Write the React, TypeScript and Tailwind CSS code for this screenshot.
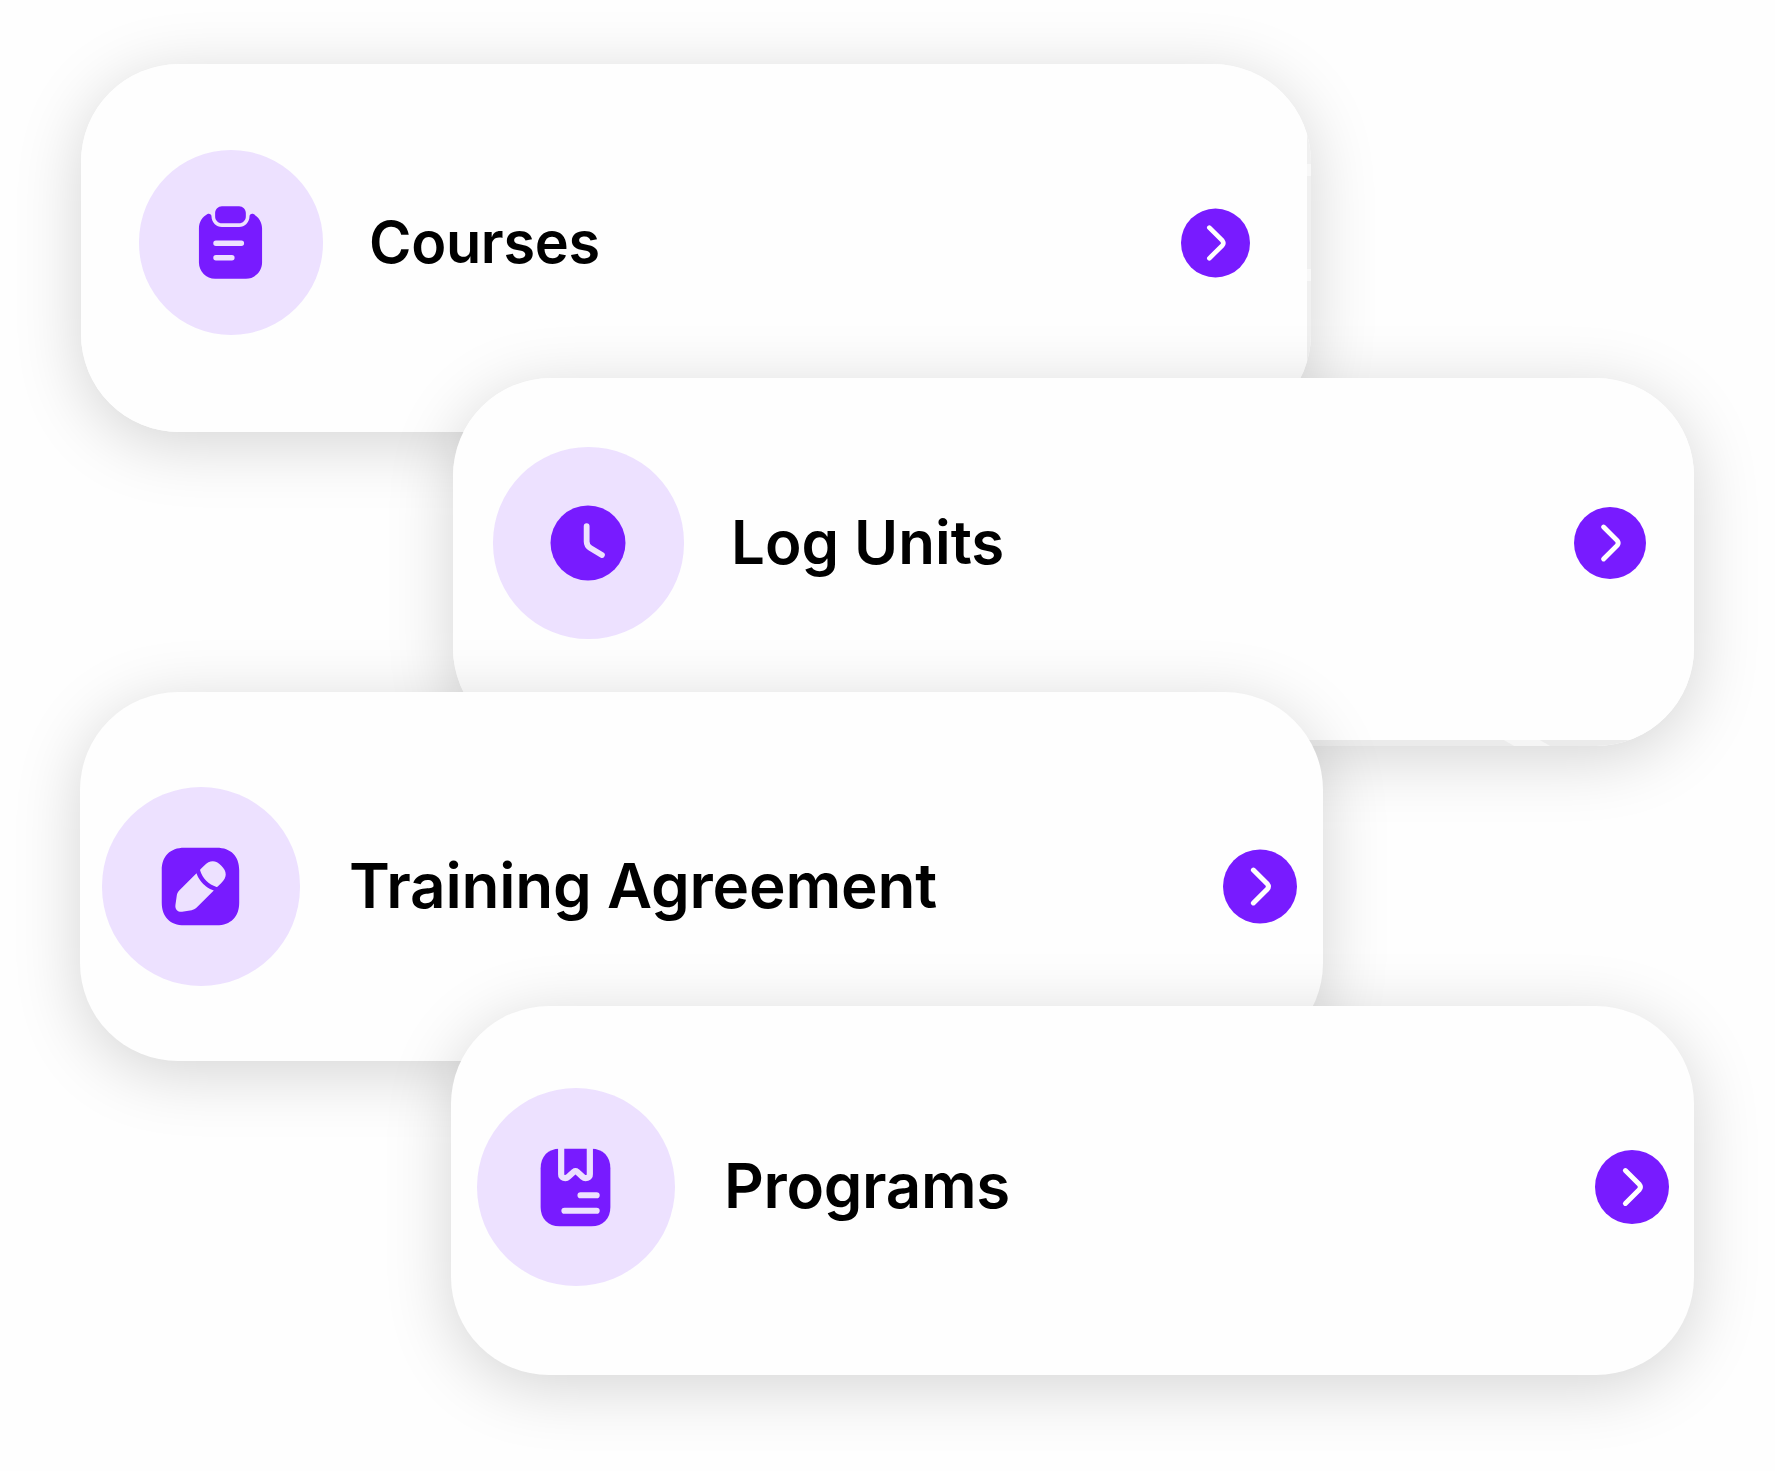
import type { ReactNode } from "react";

interface MenuCardProps {
  title: string;
  icon: ReactNode;
  card: string;
  badge: string;
  iconSize: string;
  text: string;
  arrow: string;
  children?: ReactNode;
}

const ClipboardIcon = () => (
  <svg viewBox="0 0 24 24" className="w-full h-full">
    <g fill="#781bff">
      <path d="M14.35 2h-4.7c-1.04 0-1.89.84-1.89 1.88v.94c0 1.04.84 1.88 1.88 1.88h4.71c1.04 0 1.88-.84 1.88-1.88v-.94C16.24 2.84 15.39 2 14.35 2Z" />
      <path d="M17.24 4.82c0 1.59-1.3 2.89-2.89 2.89h-4.7c-1.59 0-2.89-1.3-2.89-2.89 0-.56-.6-.91-1.1-.65-1.41.75-2.37 2.24-2.37 3.95v9.41c0 2.46 2.01 4.47 4.47 4.47h8.48c2.46 0 4.47-2.01 4.47-4.47V8.12c0-1.71-.96-3.2-2.37-3.95-.5-.26-1.1.09-1.1.65Z" />
    </g>
    <path d="M8 12.2h7M8 16.2h4.38" stroke="#ede1ff" strokeWidth="1.5" strokeLinecap="round" />
  </svg>
);

const ClockIcon = () => (
  <svg viewBox="0 0 24 24" className="w-full h-full">
    <circle cx="12" cy="12" r="10" fill="#781bff" />
    <path
      d="M11.64 7.51v4.1c0 .62.43 1.4.97 1.72l3.1 1.85"
      fill="none"
      stroke="#ede1ff"
      strokeWidth="1.55"
      strokeLinecap="round"
    />
  </svg>
);

const PencilIcon = () => (
  <svg viewBox="0 0 24 24" className="w-full h-full">
    <path
      fill="#781bff"
      d="M16.19 2H7.81C4.17 2 2 4.17 2 7.81v8.37C2 19.83 4.17 22 7.81 22h8.37c3.64 0 5.81-2.17 5.81-5.81V7.81C22 4.17 19.83 2 16.19 2Z"
    />
    <g fill="#ede1ff">
      <path d="M10.95 17.51c-.29.29-.84.57-1.24.63l-2.46.35c-.09.01-.18.02-.27.02-.41 0-.79-.14-1.06-.41-.33-.33-.47-.81-.39-1.34l.35-2.46c.06-.41.33-.95.63-1.24l4.46-4.46c.08.21.16.42.27.66.1.21.21.43.33.63.1.17.21.33.3.45.11.17.24.33.32.42.05.07.09.12.11.14.25.3.54.58.79.79.07.07.11.11.13.12.15.12.3.24.43.33.16.12.32.23.49.32.2.12.42.23.64.34.23.1.44.19.65.26l-4.48 4.45Z" />
      <path d="m17.37 11.09-.92.93c-.06.06-.14.09-.22.09-.03 0-.07 0-.09-.01-2.03-.58-3.65-2.2-4.23-4.23-.03-.11 0-.23.08-.3l.93-.93c1.52-1.52 2.97-1.49 4.46 0 .76.76 1.13 1.49 1.13 2.25-.01.72-.38 1.44-1.14 2.2Z" />
    </g>
  </svg>
);

const BookIcon = () => (
  <svg viewBox="0 0 24 24" className="w-full h-full">
    <path
      fill="#781bff"
      d="M16.1 2H7.9C4.9 2 3 4 3 7v10c0 3 1.9 5 4.9 5h8.2c3 0 4.9-2 4.9-5V7c0-3-1.9-5-4.9-5Z"
    />
    <g fill="none" stroke="#ede1ff" strokeWidth="1.6">
      <path d="M8.3 1v7.6c0 .95 1.15 1.3 1.85.65l1.5-1.35a.5.5 0 0 1 .7 0l1.5 1.35c.7.65 1.85.3 1.85-.65V1" />
      <path d="M13.3 14h4.15M9.15 18h8.3" strokeLinecap="round" />
    </g>
  </svg>
);

const MenuCard = ({ title, icon, card, badge, iconSize, text, arrow, children }: MenuCardProps) => (
  <article
    className={`relative shrink-0 rounded-[98px] flex items-start shadow-[0_12px_66px_rgba(0,0,0,0.17)] ${card}`}
  >
    <div className={`shrink-0 rounded-full bg-[#ede1ff] flex items-center justify-center ${badge}`}>
      <div className={iconSize}>{icon}</div>
    </div>
    <h2 className={`grow flex items-center font-semibold text-black whitespace-nowrap ${text}`}>{title}</h2>
    <svg viewBox="-37 -37 74 74" className={`shrink-0 ${arrow}`}>
      <circle r="37" fill="#781bff" />
      <path
        d="M-6.6-16.4 7.4-2.5q2 2.5 0 5L-6.6 16.4"
        fill="none"
        stroke="#fff"
        strokeWidth="5"
        strokeLinecap="round"
      />
    </svg>
    {children}
  </article>
);

const App = () => (
  <main className="w-[1775px] h-[1471px] overflow-hidden bg-[#fefefe] pt-16 flex flex-col items-start font-['Inter',sans-serif]">
    <MenuCard
      title="Courses"
      icon={<ClipboardIcon />}
      card="h-[368px] ml-[81px] w-[1230px] pt-[86px] pl-[58px] pr-[61px] bg-[linear-gradient(to_right,#fefefe_1226px,#f0f0f0_1226px)]"
      badge="w-[184px] h-[185px]"
      iconSize="size-[87px] mr-[2px]"
      text="h-[185px] pl-[46px] text-[57.6px] tracking-[-0.3px]"
      arrow="mt-[58px] w-[69px] h-[70px]"
    >
      <span className="absolute right-0 top-[100px] w-1 h-3 bg-[#f8f8f8]" />
      <span className="absolute right-0 top-[205px] w-1 h-3 bg-[#f8f8f8]" />
    </MenuCard>
    <MenuCard
      title="Log Units"
      icon={<ClockIcon />}
      card="h-[368px] -mt-[54px] ml-[453px] w-[1241px] pt-[69px] pl-10 pr-12 bg-[linear-gradient(to_bottom,#fefefe_362px,#ebebeb_362px)]"
      badge="w-[191px] h-[192px]"
      iconSize="size-[90px] mr-px"
      text="h-[190px] pl-[47px] text-[60px]"
      arrow="mt-[60px] size-[72px]"
    >
      <span className="absolute right-[149px] bottom-0 w-9 h-1.5 skew-x-[60deg] bg-[#f5f5f5]" />
    </MenuCard>
    <MenuCard
      title="Training Agreement"
      icon={<PencilIcon />}
      card="h-[369px] -mt-[54px] ml-[80px] w-[1243px] pt-[95px] pl-[22px] pr-[26px] bg-[#fefefe]"
      badge="w-[198px] h-[199px]"
      iconSize="size-[93px] mr-[2px]"
      text="h-[197px] pl-[49px] text-[62px] tracking-[-0.2px]"
      arrow="mt-[62px] w-[74px] h-[75px]"
    />
    <MenuCard
      title="Programs"
      icon={<BookIcon />}
      card="h-[369px] -mt-[55px] ml-[451px] w-[1243px] pt-[82px] pl-[26px] pr-[25px] bg-[#fefefe]"
      badge="size-[198px]"
      iconSize="size-[93px] mr-px"
      text="h-[196px] pl-[49px] text-[61.8px] tracking-[-0.3px]"
      arrow="mt-[62px] size-[74px]"
    />
  </main>
);

export default App;
